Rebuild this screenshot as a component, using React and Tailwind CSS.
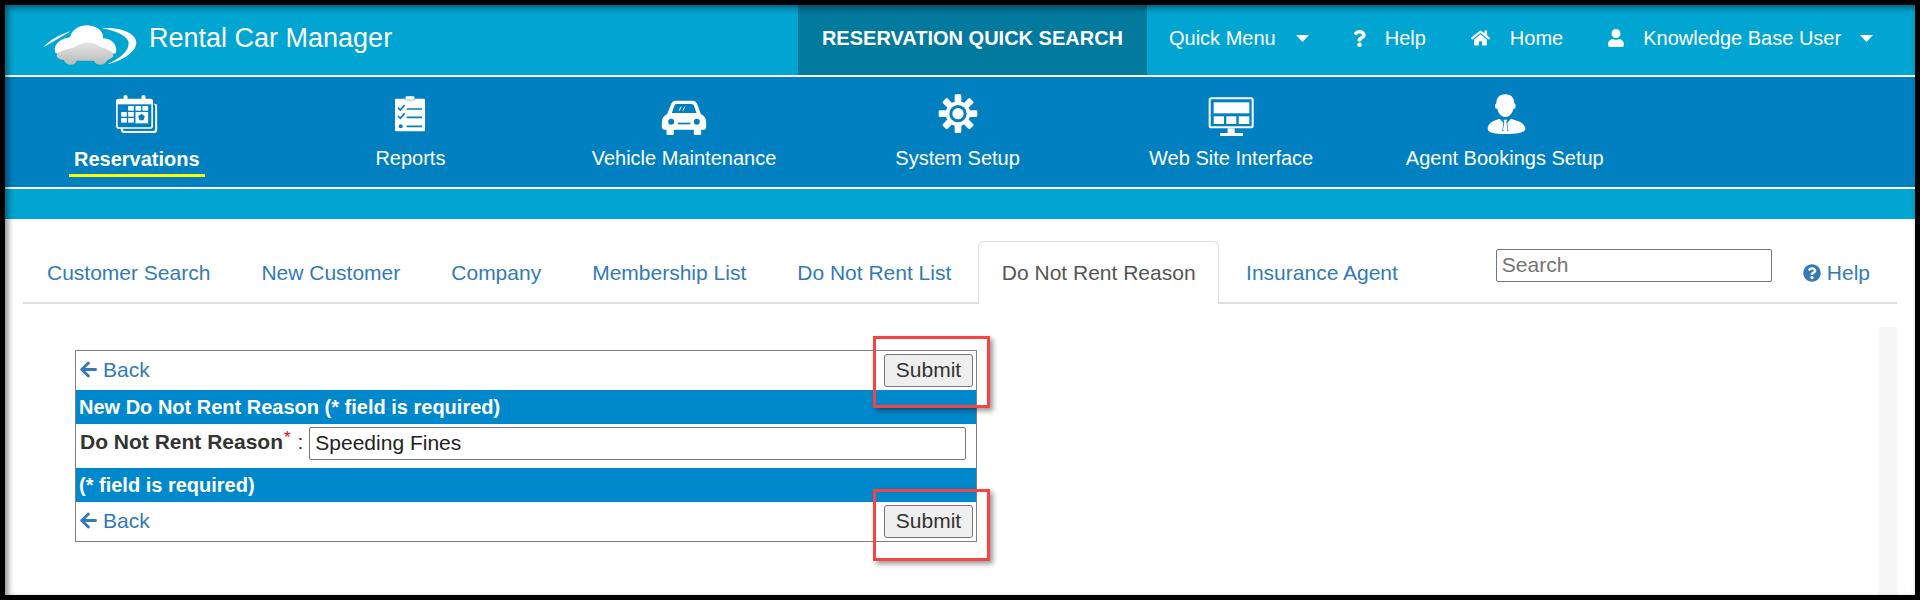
import React from "react";
import { FaHome, FaUser, FaQuestion, FaArrowLeft, FaQuestionCircle } from "react-icons/fa";

const Caret = () => (
  <svg width="13" height="7" viewBox="0 0 13 7" className="block"><path d="M0 0h13L6.5 7z" fill="#fff" /></svg>
);

const Logo = () => (
  <svg width="100" height="50" viewBox="60 30 300 150" className="block">
    <defs>
      <linearGradient id="carG" x1="0" y1="0" x2="0" y2="1">
        <stop offset="0" stopColor="#e4e4e4" />
        <stop offset="1" stopColor="#b9b9b9" />
      </linearGradient>
    </defs>
    <path d="M70 112C88 90 120 74 152 64C125 80 98 96 70 112Z" fill="#fff" />
    <path d="M245 55C300 50 350 70 349 100C346 130 300 155 262 163C300 145 326 125 326 100C326 80 290 62 245 55Z" fill="#fff" />
    <path d="M106 128C98 105 120 85 150 82C155 55 190 40 216 48C238 52 252 70 249 85C272 85 294 102 288 130L240 135H120Z" fill="#fff" />
    <path d="M110 136C114 122 150 116 165 112C178 96 222 92 240 110C260 115 280 124 280 136C280 146 266 148 262 150C255 170 226 167 222 152L170 152C165 170 136 167 132 150C120 148 110 146 110 136Z" fill="url(#carG)" />
  </svg>
);

const IconBox = ({ vb, children }) => (
  <svg width="50" height="44" viewBox={vb} className="block">{children}</svg>
);

const CalendarIcon = () => (
  <IconBox vb="66.5 24 150 132">
    <path d="M195 56q7 0 7 7v72q0 9-9 9H102q-8 0-9-9v-5h6v3q0 5 5 5h86q6 0 6-6V63q0-5-6-7z" fill="#fff" />
    <rect x="81" y="44" width="106" height="85" rx="6" fill="none" stroke="#fff" strokeWidth="5" />
    <rect x="81" y="44" width="106" height="14" fill="#fff" />
    <rect x="101" y="30" width="12" height="20" rx="6" fill="#fff" />
    <rect x="155" y="30" width="12" height="20" rx="6" fill="#fff" />
    <g fill="#fff">
      <rect x="115" y="63" width="17" height="14" /><rect x="137" y="63" width="17" height="14" /><rect x="158" y="63" width="17" height="14" />
      <rect x="94" y="81" width="17" height="14" /><rect x="115" y="81" width="17" height="14" />
      <rect x="94" y="99" width="17" height="14" /><rect x="115" y="99" width="17" height="14" />
      <rect x="137" y="81" width="38" height="34" />
    </g>
    <path d="M155 86l10 8-4 12h-12l-4-12z" fill="#0080c0" />
  </IconBox>
);

const ClipboardIcon = () => (
  <IconBox vb="885 24 150 132">
    <rect x="915" y="41" width="90" height="98" rx="3" fill="#fff" />
    <rect x="946" y="33" width="28" height="12" rx="4" fill="#fff" stroke="#0080c0" strokeWidth="1.5" />
    <g fill="none" stroke="#0080c0" strokeWidth="5">
      <path d="M924 68l7 7 13-15M924 93l7 7 13-15" />
      <path d="M950 72h46M950 97h46M950 124h46" />
    </g>
    <circle cx="932" cy="124" r="6" fill="#0080c0" />
  </IconBox>
);

const CarIcon = () => (
  <IconBox vb="61.5 24 150 132">
    <path d="M112 47h50q10 0 14 10l11 30q16 8 16 24v15q0 6-5 8h-10v12q0 4-4 4h-14q-4 0-4-4v-12h-60v12q0 4-4 4H88q-4 0-4-4v-12H76q-6-2-6-8v-15q0-16 16-24l12-30q4-10 14-10z" fill="#fff" />
    <path d="M114 57h46q5 0 7 6l7 21H100l7-21q2-6 7-6z" fill="#0080c0" />
    <path d="M122 77l6-12M133 77l6-12" stroke="#fff" strokeWidth="3" fill="none" />
    <circle cx="98" cy="110" r="9" fill="#0080c0" />
    <circle cx="175" cy="110" r="9" fill="#0080c0" />
    <rect x="118" y="113" width="38" height="5" fill="#0080c0" />
  </IconBox>
);

const gearTeeth = [0, 45, 90, 135, 180, 225, 270, 315];
const GearIcon = () => (
  <IconBox vb="881 24 150 132">
    <g fill="#fff">
      {gearTeeth.map((a) => (
        <rect key={a} x="946" y="28" width="20" height="24" rx="4" transform={`rotate(${a} 956 86)`} />
      ))}
    </g>
    <circle cx="956" cy="86" r="37" fill="#fff" />
    <circle cx="956" cy="86" r="26" fill="#0080c0" />
    <circle cx="956" cy="86" r="17" fill="#fff" />
  </IconBox>
);

const MonitorIcon = () => (
  <IconBox vb="107 24 150 132">
    <rect x="118" y="40" width="129" height="87" rx="5" fill="none" stroke="#fff" strokeWidth="6" />
    <rect x="130" y="52" width="107" height="33" fill="#fff" />
    <rect x="130" y="94" width="31" height="23" fill="#fff" />
    <rect x="168" y="94" width="30" height="23" fill="#fff" />
    <rect x="205" y="94" width="32" height="23" fill="#fff" />
    <rect x="172" y="130" width="21" height="14" fill="#fff" />
    <rect x="149" y="144" width="69" height="9" rx="3" fill="#fff" />
  </IconBox>
);

const AgentIcon = () => (
  <IconBox vb="932 24 150 132">
    <path d="M1008 28c19 0 27 13 27 27l4 4-1 11-6 2c-3 14-13 24-24 24s-21-10-24-24l-6-2-1-11 4-4c0-14 8-27 27-27z" fill="#fff" />
    <path d="M955 132c0-20 20-26 36-31l11 12-3 25h18l-3-25 11-12c16 5 43 11 43 31 0 12-30 15-60 15s-53-3-53-15z" fill="#fff" />
    <path d="M1002 104h12l-3 7 4 23-7 8-7-8 4-23z" fill="#fff" />
  </IconBox>
);

const navItems = [
  { label: "Reservations", Icon: CalendarIcon, active: true },
  { label: "Reports", Icon: ClipboardIcon },
  { label: "Vehicle Maintenance", Icon: CarIcon },
  { label: "System Setup", Icon: GearIcon },
  { label: "Web Site Interface", Icon: MonitorIcon },
  { label: "Agent Bookings Setup", Icon: AgentIcon },
];

const tabs = ["Customer Search", "New Customer", "Company", "Membership List", "Do Not Rent List", "Do Not Rent Reason", "Insurance Agent"];

const ActionRow = () => (
  <div className="h-[39px] flex items-center justify-between pl-[3px] pr-[3px]">
    <a className="flex items-center text-[#337ab7] pb-[2px]">
      <FaArrowLeft className="w-[19px] h-[19px] mr-[5px]" />
      <span>Back</span>
    </a>
    <button className="w-[89px] h-[33px] bg-[#efefef] border border-[#767676] rounded-[3px] text-[#333] flex items-center justify-center pb-[2px]">Submit</button>
  </div>
);

const BlueRow = ({ children }) => (
  <div className="h-[34px] bg-[#0088cc] text-white text-[20px] font-bold flex items-center pl-[3px]">{children}</div>
);

export default function App() {
  return (
    <div className="relative w-[1920px] h-[600px] overflow-hidden bg-white text-[21px] text-[#333]" style={{ fontFamily: '"Liberation Sans", Arial, sans-serif' }}>
      <header className="h-[75px] bg-[#00a5d2] flex text-white">
        <div className="ml-[40px] mt-[20px]"><Logo /></div>
        <div className="ml-[9px] mt-[20px] text-[27px] leading-[36px] h-[36px]">Rental Car Manager</div>
        <div className="ml-auto flex items-center w-[1122px] pt-[5px] text-[20px]">
          <div className="w-[349px] h-full flex items-center justify-center bg-[#027a9e] font-bold text-[20px] pb-[5px]">RESERVATION QUICK SEARCH</div>
          <div className="flex items-center h-full pb-[4px]">
            <span className="ml-[22px]">Quick Menu</span>
            <span className="ml-[20px]"><Caret /></span>
            <FaQuestion className="ml-[44px] w-[13px] h-[17px]" />
            <span className="ml-[19px]">Help</span>
            <FaHome className="ml-[45px] w-[19px] h-[18px]" />
            <span className="ml-[20px]">Home</span>
            <FaUser className="ml-[45px] w-[16px] h-[18px]" />
            <span className="ml-[19px]">Knowledge Base User</span>
            <span className="ml-[19px]"><Caret /></span>
          </div>
        </div>
      </header>
      <div className="h-[2px] bg-white" />
      <nav className="h-[110px] bg-[#0080c0] flex text-white text-[20px]">
        {navItems.map(({ label, Icon, active }) => (
          <div key={label} className="w-[273.6px] flex flex-col items-center pt-[16px]">
            <Icon />
            {active ? (
              <span className="mt-[10px] px-[5px] pb-[3px] h-[30px] leading-[24px] font-bold border-b-[3px] border-[#ffff00]">{label}</span>
            ) : (
              <span className="mt-[9px] leading-[24px]">{label}</span>
            )}
          </div>
        ))}
      </nav>
      <div className="h-[2px] bg-white" />
      <div className="h-[30px] bg-[#00a5d2]" />

      <main className="mx-[23px]">
        <div className="h-[85px] pt-[22px] flex border-b-[2px] border-[#dddddd]">
          <ul className="flex flex-1">
            {tabs.map((t) => {
              const active = t === "Do Not Rent Reason";
              return (
                <li key={t} className={active
                  ? "h-[63px] mr-[3px] px-[22.5px] pt-[17px] leading-[28px] whitespace-nowrap bg-white text-[#555] border-[1.5px] border-b-0 border-[#dddddd] rounded-t-[6px] relative"
                  : "h-[61px] mr-[3px] px-[24px] pt-[18px] leading-[28px] whitespace-nowrap text-[#337ab7]"}>{t}</li>
              );
            })}
          </ul>
          <div className="w-[276px] h-[33px] mt-[8px] border border-[#767676] rounded-[2px] pl-[5px] text-[#757575] leading-[29px]">Search</div>
          <a className="ml-[31px] mr-[27px] h-[28px] mt-[18px] flex items-center text-[#337ab7]">
            <FaQuestionCircle className="w-[18px] h-[18px] mr-[6px]" />Help
          </a>
        </div>
        <div className="flex justify-between items-start">
          <form className="ml-[52px] mt-[46px] w-[902px] border border-[#808080]">
            <ActionRow />
            <BlueRow>New Do Not Rent Reason (* field is required)</BlueRow>
            <div className="h-[44px] flex pl-[4px] pt-[3px]">
              <div className="leading-[29px] whitespace-nowrap">
                <b>Do Not Rent Reason</b><sup className="text-red-600 text-[17px] ml-[1px] mr-[1px] top-[-6px]">*</sup> :
              </div>
              <div className="ml-[6px] w-[657px] h-[33px] border border-[#767676] rounded-[2px] pl-[5px] text-[#222] leading-[29px]">Speeding Fines</div>
            </div>
            <BlueRow>(* field is required)</BlueRow>
            <ActionRow />
          </form>
          <div className="w-[18px] h-[273px] mt-[23px] bg-[#f7f7f7]" />
        </div>
      </main>

      <div className="absolute left-[873px] top-[336px] w-[117px] h-[72px] border-[3px] border-[#f44444] shadow-[3px_3px_5px_rgba(0,0,0,0.4)]" />
      <div className="absolute left-[873px] top-[489px] w-[117px] h-[72px] border-[3px] border-[#f44444] shadow-[3px_3px_5px_rgba(0,0,0,0.4)]" />
      <div className="absolute inset-0 pointer-events-none border-[5px] border-black shadow-[inset_3px_3px_6px_rgba(0,0,0,0.45)]" />
    </div>
  );
}
